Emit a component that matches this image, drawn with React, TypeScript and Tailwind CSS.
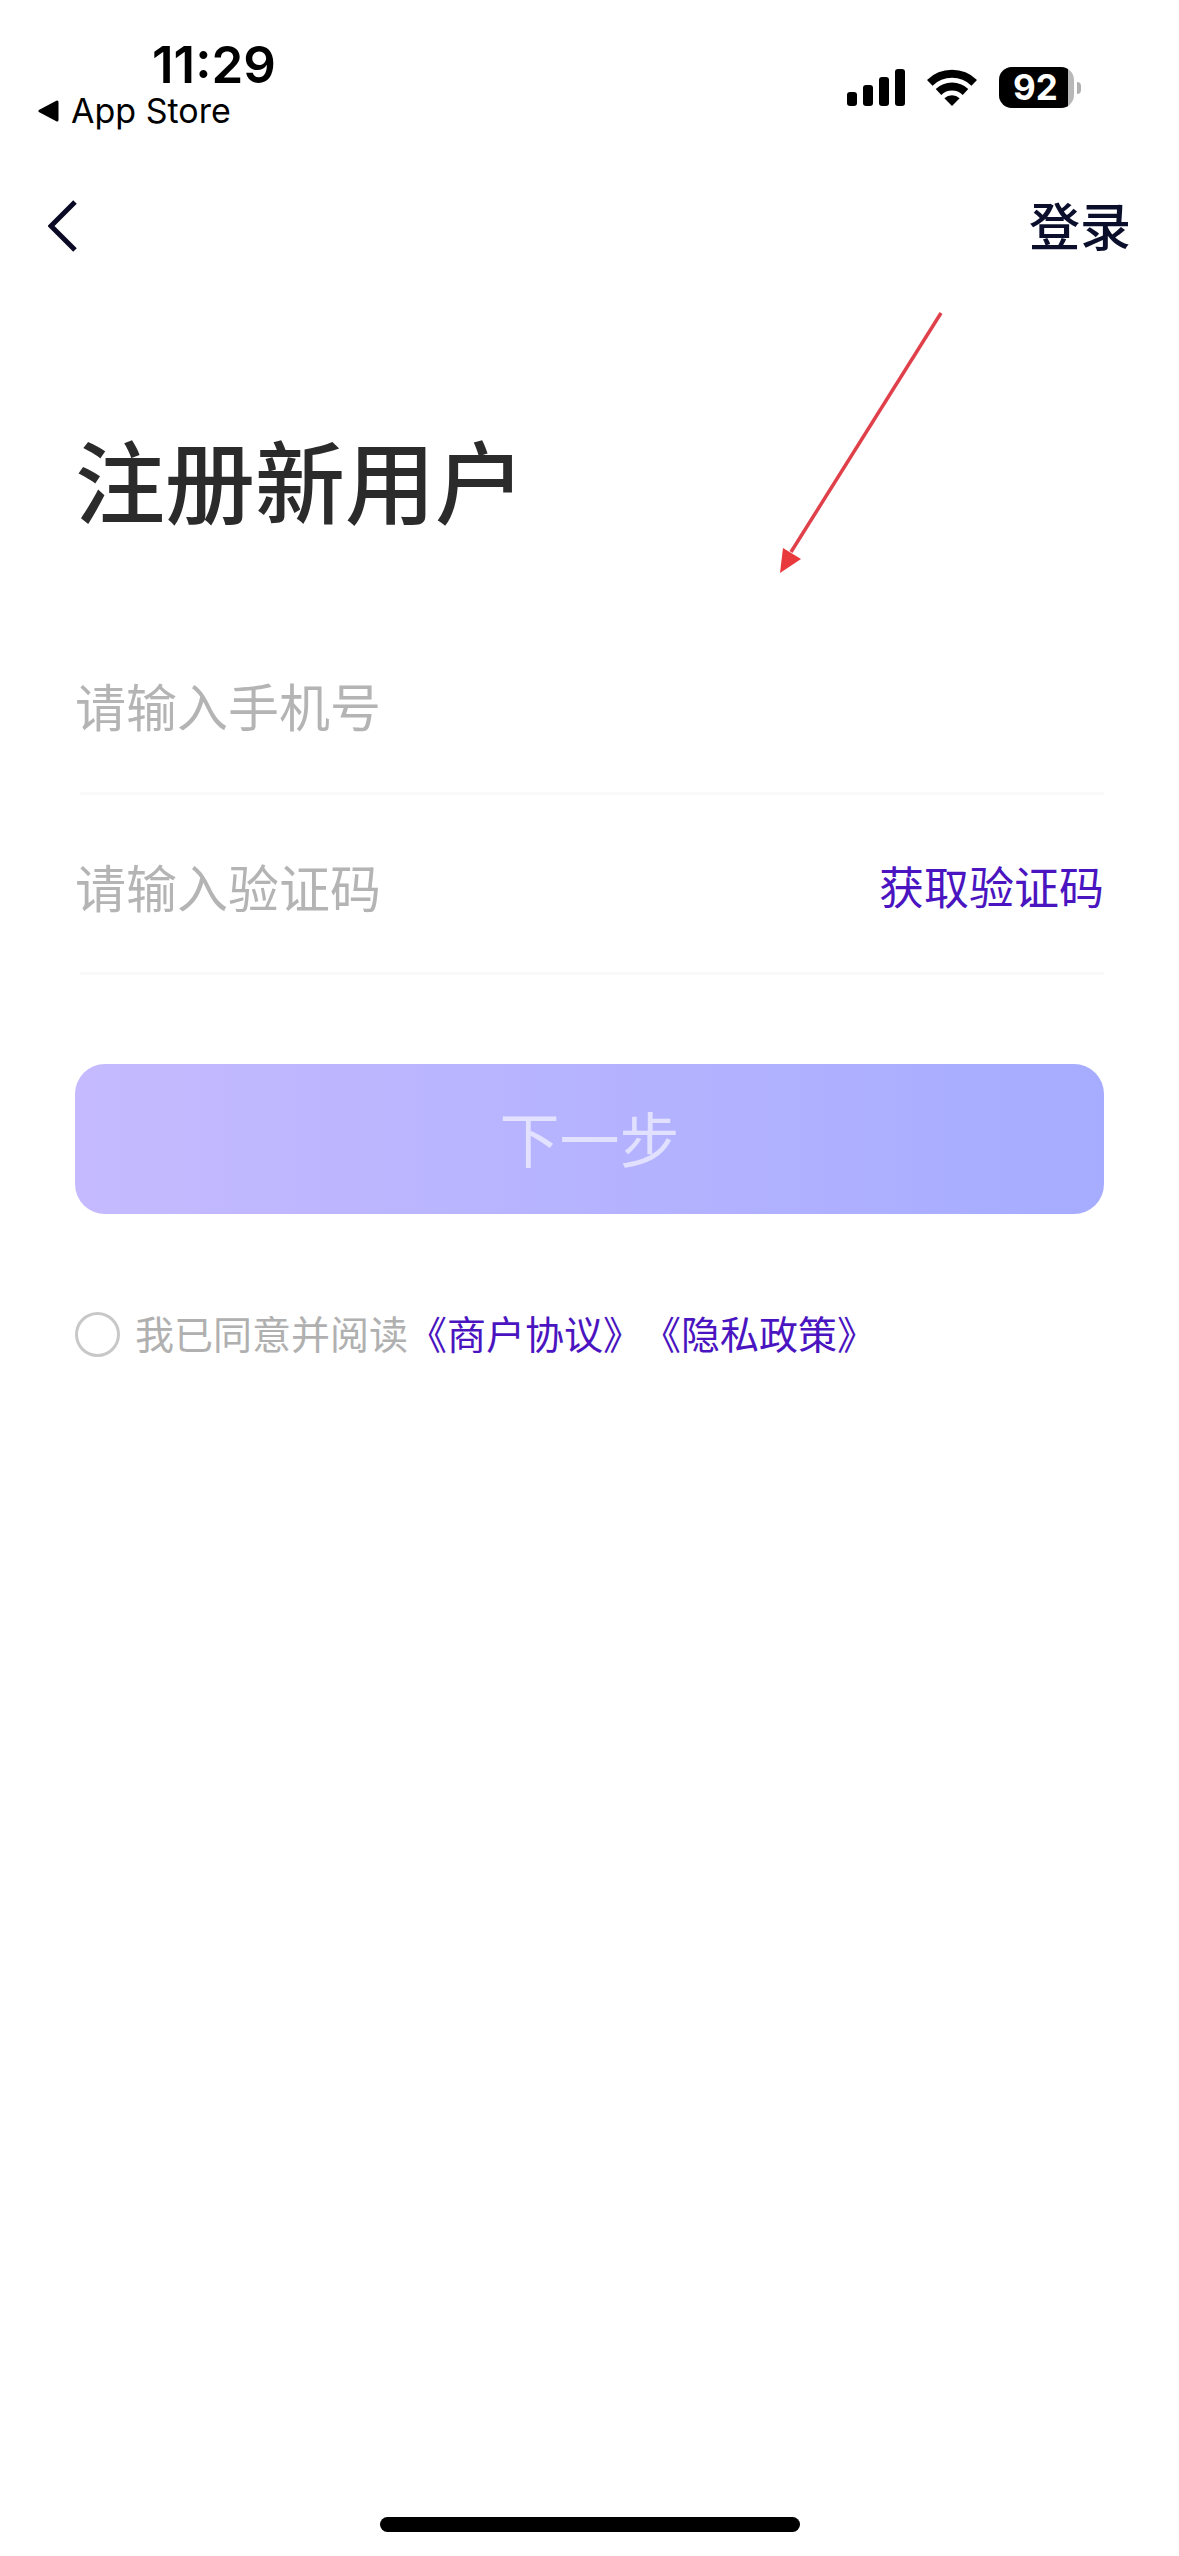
import React, { useState } from "react";

function SignalIcon() {
  return (
    <svg width="58" height="38" viewBox="0 0 58 38" fill="#000" aria-hidden="true">
      <rect x="0" y="23" width="10" height="14" rx="3" />
      <rect x="16" y="16" width="10" height="21" rx="3" />
      <rect x="32" y="8" width="10" height="29" rx="3" />
      <rect x="48" y="0" width="10" height="37" rx="3" />
    </svg>
  );
}

function WifiIcon() {
  return (
    <svg width="50" height="38" viewBox="0 0 50 38" aria-hidden="true">
      <g fill="none" stroke="#000" strokeWidth="8">
        <path d="M2.8 13.8A32 32 0 0 1 47.2 13.8" />
        <path d="M11.5 23A19.5 19.5 0 0 1 38.5 23" />
      </g>
      <path d="M25 37L17.4 29.2A11 11 0 0 1 32.6 29.2Z" fill="#000" />
    </svg>
  );
}

function Battery() {
  return (
    <div className="flex items-center gap-[3px]" aria-label="92%">
      <div className="flex h-[41px] w-[75px] overflow-hidden rounded-[13px] bg-[#b8b8b8]">
        <div className="flex w-[69px] items-center justify-center bg-black pl-1 text-[35px] leading-none font-bold text-white">
          92
        </div>
      </div>
      <div className="h-3 w-1 rounded-r-full bg-[#b0b0b0]" />
    </div>
  );
}

function StatusBar() {
  return (
    <div className="flex h-[180px] items-start justify-between pr-[98px] pl-[38px] font-['Inter',sans-serif] text-black">
      <div className="flex flex-col pt-10">
        <span className="pl-[114px] text-[51px] leading-[50px] font-semibold">11:29</span>
        <a href="#app-store" className="flex items-center gap-3 text-[34px] leading-[42px]">
          <svg width="21" height="22" viewBox="0 0 21 22" aria-hidden="true">
            <path d="M2 11L19 2V20Z" fill="#000" stroke="#000" strokeWidth="3" strokeLinejoin="round" />
          </svg>
          App Store
        </a>
      </div>
      <div className="flex items-center gap-[22px] pt-[67px]">
        <SignalIcon />
        <WifiIcon />
        <Battery />
      </div>
    </div>
  );
}

function NavBar() {
  return (
    <header className="flex h-[92px] items-center justify-between px-12">
      <button type="button" aria-label="返回" className="flex h-full w-16 items-center">
        <svg width="30" height="52" viewBox="0 0 30 52" fill="none" aria-hidden="true">
          <path d="M27 2L3 26L27 50" stroke="#0a0a24" strokeWidth="5" />
        </svg>
      </button>
      <button type="button" className="pb-1 text-[51px] leading-none font-medium text-[#0b0f2c]">
        登录
      </button>
    </header>
  );
}

function Arrow() {
  return (
    <svg
      className="pointer-events-none absolute top-[312px] right-[236px]"
      width="164"
      height="264"
      viewBox="0 0 164 264"
      aria-hidden="true"
    >
      <path d="M162 1L12 240" stroke="#e0404a" strokeWidth="3.5" fill="none" />
      <path d="M1 261L4 236L22 247Z" fill="#e8393c" />
    </svg>
  );
}

export default function App() {
  const [agreed, setAgreed] = useState(false);
  const field =
    "h-full min-w-0 flex-1 bg-transparent text-[51px] text-[#2b2b2b] outline-none placeholder:text-[#b4b4b4]";
  return (
    <div className="relative flex min-h-screen flex-col bg-white font-['Noto_Sans_CJK_SC',sans-serif]">
      <StatusBar />
      <NavBar />
      <main className="flex flex-1 flex-col px-[75px] pt-[152px]">
        <h1 className="text-[90px] leading-[108px] font-medium text-[#2b2b2b]">注册新用户</h1>
        <form className="flex flex-col pt-20" onSubmit={(e) => e.preventDefault()}>
          <div className="flex h-[180px] items-center pt-1.5">
            <input type="tel" aria-label="手机号" placeholder="请输入手机号" className={field} />
          </div>
          <div className="ml-[5px] h-[3px] bg-[#f9f9f9]" />
          <div className="flex h-[177px] items-center pt-1">
            <input type="text" aria-label="验证码" placeholder="请输入验证码" className={field} />
            <button type="button" className="text-[45px] leading-none text-[#4a14c0]">
              获取验证码
            </button>
          </div>
          <div className="ml-[5px] h-[3px] bg-[#f9f9f9]" />
          <button
            type="submit"
            className="mt-[89px] h-[150px] rounded-[30px] bg-linear-to-r from-[#c5baff] to-[#a6acff] pb-1 text-[60px] leading-none text-white/60"
          >
            下一步
          </button>
          <div className="flex items-center pt-[91px] text-[39px] leading-[54px] [text-spacing-trim:space-all]">
            <input
              id="agree"
              type="checkbox"
              checked={agreed}
              onChange={(e) => setAgreed(e.target.checked)}
              className="mr-[15px] size-[45px] appearance-none rounded-full border-3 border-[#c8c8c8] checked:bg-[#4a14c0]"
            />
            <div className="flex pb-1">
              <label htmlFor="agree" className="text-[#b0b0b0]">
                我已同意并阅读
              </label>
              <a href="#merchant" className="text-[#4a14c0]">
                《商户协议》
              </a>
              <a href="#privacy" className="text-[#4a14c0]">
                《隐私政策》
              </a>
            </div>
          </div>
        </form>
      </main>
      <div className="mb-6 h-[15px] w-[420px] self-center rounded-full bg-black" />
      <Arrow />
    </div>
  );
}
